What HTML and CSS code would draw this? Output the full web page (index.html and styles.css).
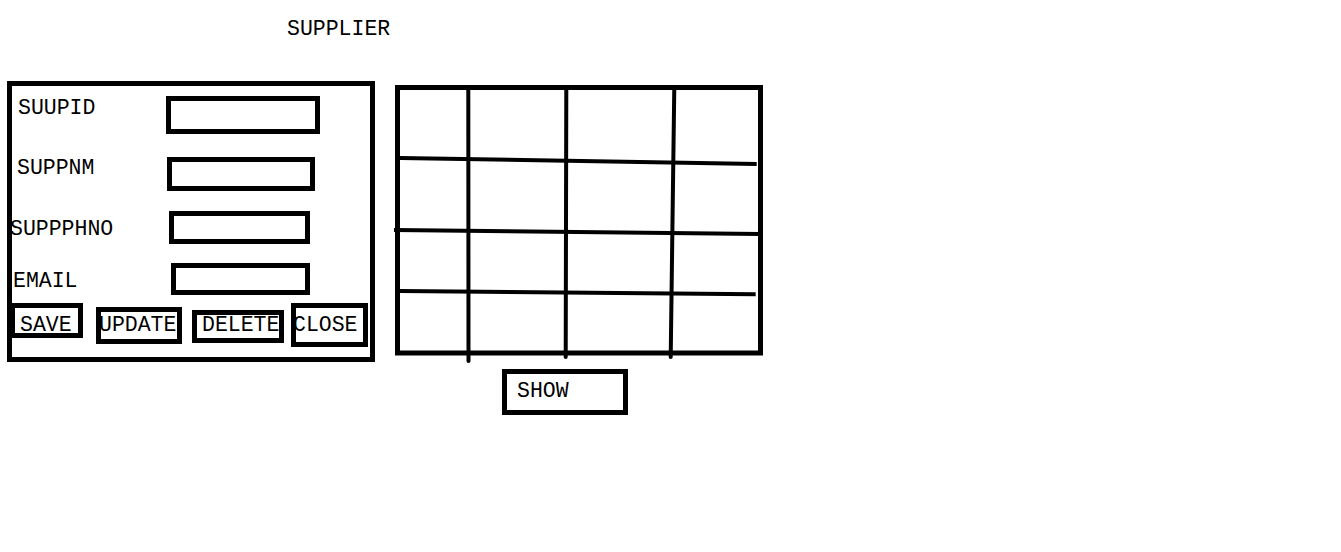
FILE: index.html
```html
<!DOCTYPE html>
<html lang="en">
<head>
<meta charset="utf-8">
<title>Supplier</title>
<link rel="stylesheet" href="styles.css">
</head>
<body>
<h1 class="title">SUPPLIER</h1>
<main class="layout">
  <form class="panel">
    <div class="field field--id"><span class="label">SUUPID</span><span class="box"></span></div>
    <div class="field field--name"><span class="label">SUPPNM</span><span class="box"></span></div>
    <div class="field field--phone"><span class="label">SUPPPHNO</span><span class="box"></span></div>
    <div class="field field--email"><span class="label">EMAIL</span><span class="box"></span></div>
    <div class="actions">
      <span class="btn btn--save"><span class="btn-text">SAVE</span></span>
      <span class="btn btn--update"><span class="btn-text">UPDATE</span></span>
      <span class="btn btn--delete"><span class="btn-text">DELETE</span></span>
      <span class="btn btn--close"><span class="btn-text">CLOSE</span></span>
    </div>
  </form>
  <section class="table-area">
    <svg class="grid" width="374" height="284" viewBox="0 0 374 284">
      <rect x="5.5" y="5.5" width="363" height="265.5" fill="none" stroke="#000" stroke-width="5"/>
      <g stroke="#000" stroke-width="4" fill="none" stroke-linecap="round">
        <line x1="76.3" y1="6" x2="76.5" y2="279"/>
        <line x1="174.3" y1="6" x2="173.7" y2="275"/>
        <line x1="282.3" y1="5" x2="278.7" y2="275"/>
      </g>
      <g stroke="#000" stroke-width="4" fill="none">
        <line x1="8" y1="76" x2="364.7" y2="82"/>
        <line x1="2" y1="148" x2="368" y2="152"/>
        <line x1="8" y1="209" x2="363.7" y2="212.3"/>
      </g>
    </svg>
    <div class="btn btn--show"><span class="btn-text">SHOW</span></div>
  </section>
</main>
</body>
</html>
```

FILE: styles.css
```css
* { box-sizing: border-box; }

body {
  margin: 0;
  background: #fff;
  color: #000;
  font-family: "Liberation Mono", "DejaVu Sans Mono", monospace;
  font-size: 21.5px;
  line-height: 21px;
}

.title {
  margin: 0;
  height: 39px;
  padding: 19px 0 0 287px;
  font-size: 21.5px;
  font-weight: normal;
  line-height: 21px;
}

.layout {
  display: flex;
  align-items: flex-start;
  margin-top: 42px;
}

/* left form panel */
.panel {
  margin: 0 0 0 7px;
  width: 368px;
  height: 281px;
  border: 5px solid #000;
  display: flex;
  flex-direction: column;
}

.field {
  display: flex;
  align-items: flex-start;
}

.label {
  flex: none;
  width: 140px;
  white-space: nowrap;
}

.box {
  flex: none;
  border: 5px solid #000;
}

.field--id { margin-top: 10px; }
.field--id .label { padding-left: 6px; margin-top: 2px; }
.field--id .box { margin-left: 14px; width: 154px; height: 38px; }

.field--name { margin-top: 23px; }
.field--name .label { padding-left: 5px; margin-top: 1px; }
.field--name .box { margin-left: 15px; width: 148px; height: 34px; }

.field--phone { margin-top: 20px; }
.field--phone .label { margin-left: -2px; margin-top: 8px; }
.field--phone .box { margin-left: 19px; width: 141px; height: 33px; }

.field--email { margin-top: 19px; }
.field--email .label { padding-left: 1px; margin-top: 8px; }
.field--email .box { margin-left: 19px; width: 139px; height: 32px; }

/* buttons */
.actions {
  display: flex;
  align-items: flex-start;
  margin: 8px 0 0 -2px;
}

.btn {
  flex: none;
  display: block;
  border: 5px solid #000;
  white-space: nowrap;
}

.btn-text { display: block; }

.btn--save { width: 73px; height: 35px; }
.btn--save .btn-text { margin: 7px 0 0 5px; }

.btn--update { margin: 4px 0 0 13px; width: 86px; height: 37px; }
.btn--update .btn-text { margin: 3px 0 0 -2px; }

.btn--delete { margin: 7px 0 0 10px; width: 92px; height: 33px; }
.btn--delete .btn-text { margin: 0 0 0 5px; }

.btn--close { margin: 0 0 0 7px; width: 77px; height: 44px; }
.btn--close .btn-text { margin: 7px 0 0 -3px; }

/* right grid area */
.table-area {
  margin: 1px 0 0 17px;
  display: flex;
  flex-direction: column;
  align-items: flex-start;
}

.grid { display: block; }

.btn--show { margin: 3px 0 0 110px; width: 126px; height: 46px; }
.btn--show .btn-text { margin: 7px 0 0 10px; }
```
